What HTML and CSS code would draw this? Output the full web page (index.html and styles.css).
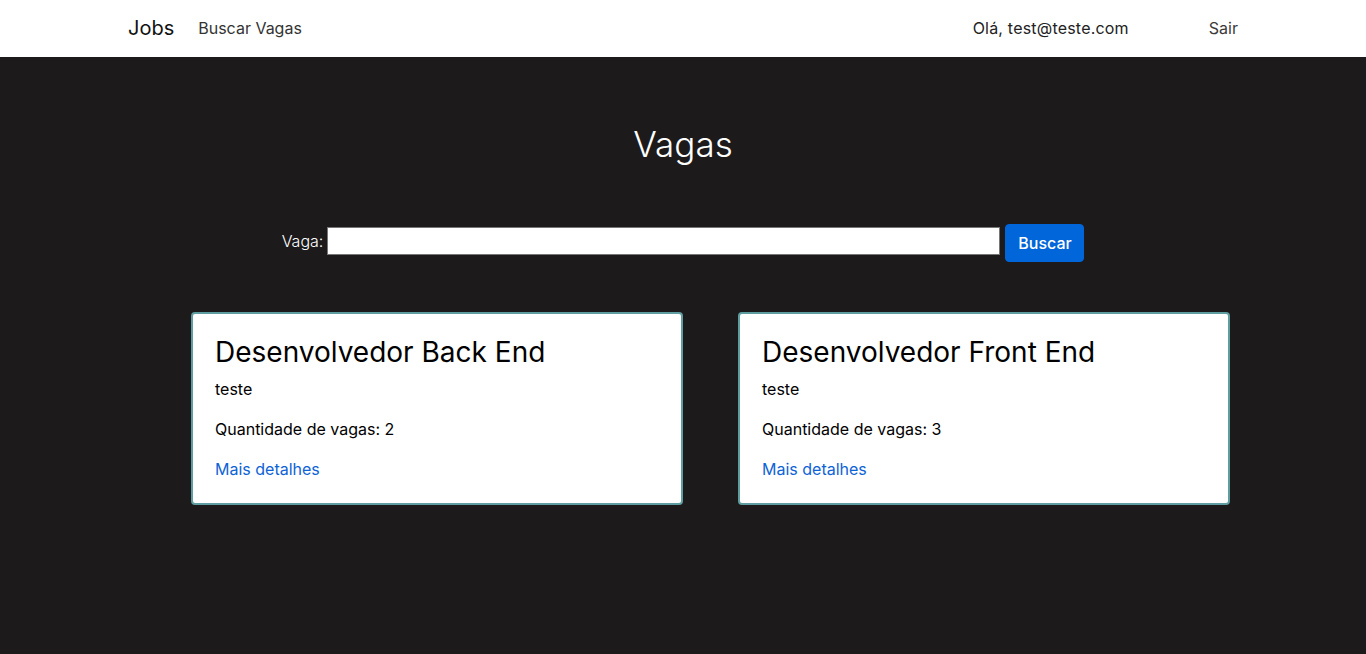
FILE: index.html
```html
<!DOCTYPE html>
<html lang="pt-BR">
<head>
<meta charset="utf-8">
<title>Jobs</title>
<link rel="stylesheet" href="styles.css">
</head>
<body>
<header class="navbar">
  <div class="nav-inner">
    <a class="brand" href="#">Jobs</a>
    <a class="nav-link" href="#">Buscar Vagas</a>
    <span class="spacer"></span>
    <span class="user">Olá, test@teste.com</span>
    <a class="nav-link logout" href="#">Sair</a>
  </div>
</header>
<main class="main">
  <h1 class="title">Vagas</h1>
  <form class="search">
    <label class="search-label" for="vaga">Vaga:</label>
    <input class="search-input" id="vaga" type="text">
    <button class="btn" type="button">Buscar</button>
  </form>
  <section class="cards">
    <article class="card">
      <h2 class="card-title">Desenvolvedor Back End</h2>
      <p class="card-text">teste</p>
      <p class="card-text">Quantidade de vagas: 2</p>
      <a class="card-link" href="#">Mais detalhes</a>
    </article>
    <article class="card">
      <h2 class="card-title">Desenvolvedor Front End</h2>
      <p class="card-text">teste</p>
      <p class="card-text">Quantidade de vagas: 3</p>
      <a class="card-link" href="#">Mais detalhes</a>
    </article>
  </section>
</main>
</body>
</html>
```

FILE: styles.css
```css
* { box-sizing: border-box; }
html, body {
  margin: 0;
  height: 100%;
}
body {
  font-family: Inter, "Noto Sans", sans-serif;
  font-size: 16px;
  line-height: 1.5;
  background: #1c1a1b;
  color: #000;
}
a { text-decoration: none; }

.navbar {
  background: #fff;
  height: 57px;
}
.nav-inner {
  max-width: 1140px;
  margin: 0 auto;
  padding: 0 15px;
  height: 56px;
  display: flex;
  align-items: center;
}
.brand {
  font-size: 20px;
  color: #111;
  margin-right: 24px;
}
.nav-link {
  color: #333;
  font-size: 16px;
}
.spacer { flex: 1; }
.user {
  color: #222;
  margin-right: 80px;
  letter-spacing: 0.2px;
}
.logout { color: #3a3a3a; }

.main {
  padding-top: 64px;
}
.title {
  margin: 0;
  text-align: center;
  color: #fff;
  font-weight: 300;
  font-size: 35px;
  line-height: 46px;
}
.search {
  margin-top: 57px;
  display: flex;
  justify-content: center;
  align-items: flex-start;
}
.search-label {
  color: #fff;
  font-weight: 300;
  margin: 5px 4px 0 0;
}
.search-input {
  width: 673px;
  height: 28px;
  border: 1px solid #767676;
  background: #fff;
  margin: 3px 5px 0 0;
  padding: 1px 2px;
}
.btn {
  background: #0066da;
  color: #fff;
  border: 1px solid #0066da;
  border-radius: 4px;
  font-family: inherit;
  font-size: 16px;
  font-weight: 500;
  line-height: 24px;
  padding: 6px 12px;
  height: 38px;
  width: 79px;
}
.cards {
  margin-top: 50px;
  margin-left: calc(50% - 492px);
  display: grid;
  grid-template-columns: 492px 492px;
  column-gap: 55px;
}
.card {
  background: #fff;
  border: 2px solid #5f9ea0;
  border-radius: 4px;
  padding: 22px;
}
.card-title {
  margin: 0 0 7px;
  font-size: 28px;
  font-weight: 400;
  line-height: 1.2;
  color: #000;
}
.card-text {
  margin: 0 0 16px;
}
.card-link {
  color: #0d63d6;
}
```
